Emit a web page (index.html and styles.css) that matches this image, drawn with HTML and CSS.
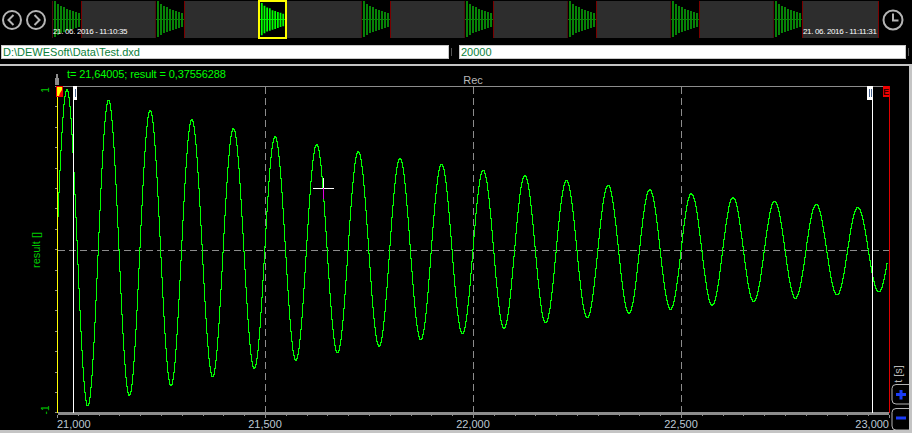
FILE: index.html
```html
<!DOCTYPE html>
<html lang="en">
<head>
  <meta charset="UTF-8">
  <meta name="viewport" content="width=device-width, initial-scale=1.0">
  <title>Test.dxd - result</title>
  <link rel="stylesheet" href="styles.css">
</head>
<body>
  <!-- Shared thumbnail waveform -->
  <svg class="defs" width="0" height="0">
    <symbol id="burst" viewBox="0 0 28 37">
      <path fill="currentColor" d="M1 0h2v36H1zM4 3h2v31H4zM7 5h2v27H7zM10 6h2v25h-2zM13 8h2v22h-2zM16 9h2v20h-2zM19 10h2v18h-2zM22 11h2v16h-2zM25 12h2v14h-2z"/>
      <path fill="currentColor" d="M0 18h28v1H0z"/>
    </symbol>
  </svg>

  <!-- Top strip with overview -->
  <div class="strip">
    <button class="round">
      <svg viewBox="0 0 20 20"><circle cx="10" cy="10" r="9"/><path d="M11.5 5 6.5 10l5 5"/></svg>
    </button>
    <button class="round">
      <svg viewBox="0 0 20 20"><circle cx="10" cy="10" r="9"/><path d="M8.5 5l5 5-5 5"/></svg>
    </button>
    <div class="thumbs">
      <div class="burst"><svg><use href="#burst"/></svg></div>
      <div class="gap"><span class="stamp stamp-start">21. 06. 2016 - 11:10:35</span></div>
      <div class="burst"><svg><use href="#burst"/></svg></div>
      <div class="gap"></div>
      <div class="burst current"><svg><use href="#burst"/></svg></div>
      <div class="gap"></div>
      <div class="burst"><svg><use href="#burst"/></svg></div>
      <div class="gap"></div>
      <div class="burst"><svg><use href="#burst"/></svg></div>
      <div class="gap"></div>
      <div class="burst"><svg><use href="#burst"/></svg></div>
      <div class="gap"></div>
      <div class="burst"><svg><use href="#burst"/></svg></div>
      <div class="gap"></div>
      <div class="burst"><svg><use href="#burst"/></svg></div>
      <div class="gap last"><span class="stamp">21. 06. 2016 - 11:11:31</span></div>
    </div>
    <button class="round clock">
      <svg viewBox="0 0 22 22"><circle cx="11" cy="11" r="9.5"/><path d="M11 4.5V11.5H16.5"/></svg>
    </button>
  </div>

  <!-- File name and sample count -->
  <div class="fields">
    <div class="field field-file">D:\DEWESoft\Data\Test.dxd</div>
    <div class="grip"></div>
    <div class="field field-count">20000</div>
    <div class="grip"></div>
  </div>

  <!-- Recorder graph, drawn in page coordinates -->
  <div class="panel">
    <svg class="plot" viewBox="0 66 909 364" width="909" height="364">
      <text class="readout" x="67" y="78">t= 21,64005; result = 0,37556288</text>
      <text class="label" x="473" y="84" text-anchor="middle">Rec</text>

      <path class="frame" d="M58 86.5H890"/>
      <path class="dash" d="M265.5 87V412M473.5 87V412M681.5 87V412M58 250.5H890"/>
      <path id="ticks" class="tick"/>
      <path class="axis" d="M58 413.5H889"/>

      <path id="signal" class="signal"/>

      <!-- Cursors -->
      <path class="pin" d="M55 85V78h1v-4h2v4h1v7z"/>
      <path class="line-yellow" d="M57.5 86V413"/>
      <path class="line-white" d="M73.5 86V413M872.5 86V413"/>
      <path class="line-red" d="M889.5 86V413"/>
      <rect class="flag-red" x="56" y="86" width="7" height="11"/>
      <path class="flag-yellow" d="M57 87h5v3l-2 3-1 3h-2z"/>
      <rect class="flag-white" x="73" y="86" width="4" height="14"/>
      <path class="flag-mark" d="M75.5 89V97"/>
      <rect class="flag-white" x="867" y="86" width="6" height="14"/>
      <path class="flag-mark" d="M869.5 89V97M871.5 89V97"/>
      <rect class="flag-red" x="883" y="86" width="6" height="11"/>
      <text class="flag-text" x="886" y="95" text-anchor="middle">E</text>

      <!-- Crosshair -->
      <path class="cross" d="M313 188.5H334M323.5 178V188"/>
      <path class="cross-pink" d="M323.5 188V199"/>

      <!-- Axis texts -->
      <text class="value" transform="translate(49 90) rotate(-90)" text-anchor="middle">1</text>
      <text class="value" transform="translate(49 410) rotate(-90)" text-anchor="middle">-1</text>
      <text class="value-name" transform="translate(40 250) rotate(-90)" text-anchor="middle">result []</text>
      <text class="label" transform="translate(902 374) rotate(-90)" text-anchor="middle">t [s]</text>
      <text class="num" x="57" y="428">21,000</text>
      <text class="num" x="265" y="428" text-anchor="middle">21,500</text>
      <text class="num" x="473" y="428" text-anchor="middle">22,000</text>
      <text class="num" x="681" y="428" text-anchor="middle">22,500</text>
      <text class="num" x="889" y="428" text-anchor="end">23,000</text>

      <!-- Zoom buttons -->
      <path class="zoom-edge" d="M909 384.5H896q-4 0-4 4V400q0 4 4 4H909M909 408.5H896q-4 0-4 4V426q0 4 4 4H909"/>
      <path class="zoom-sign" d="M896 394.5H906M901 390V399.5M896 418H906"/>
    </svg>
  </div>

  <script src="plot.js"></script>
</body>
</html>
```

FILE: styles.css
```css
html, body {
  margin: 0;
  background: #000;
}
body {
  width: 912px;
  height: 433px;
  overflow: hidden;
  display: flex;
  flex-direction: column;
  font-family: "Liberation Sans", Arial, sans-serif;
}
.defs {
  position: absolute;
}
/* Top strip */
.strip {
  height: 39px;
  display: flex;
  align-items: center;
  padding-left: 2px;
  gap: 4px;
}
.round {
  width: 20px;
  height: 20px;
  padding: 0;
  border: none;
  background: none;
  flex: none;
}
.round svg {
  display: block;
  width: 100%;
  height: 100%;
  fill: none;
  stroke: #b4b4b4;
  stroke-width: 2;
}
.clock {
  width: 22px;
  height: 22px;
  margin-left: -1px;
}
.thumbs {
  display: flex;
  height: 38px;
  margin-left: 2px;
  align-self: flex-start;
  padding-top: 1px;
}
.burst {
  width: 28px;
  height: 37px;
  color: #078207;
  border-left: 1px solid #4c1010;
  flex: none;
}
.burst svg {
  display: block;
  width: 28px;
  height: 37px;
}
.burst.current {
  width: 25px;
  height: 35px;
  color: #0f0;
  background: #000;
  border: 2px solid #ff0;
  margin-top: -1px;
}
.burst.current svg {
  width: 25px;
  height: 35px;
}
.gap {
  width: 73px;
  height: 37px;
  background: #2d2d2d;
  border-left: 1px solid #7a0000;
  position: relative;
  flex: none;
}
.gap.last {
  width: 75px;
  border-right: 1px solid #7a0000;
}
.burst.current + .gap {
  border-left: none;
  width: 74px;
}
.stamp {
  position: absolute;
  left: 0;
  bottom: 1px;
  font-size: 8px;
  letter-spacing: -0.35px;
  line-height: 10px;
  color: #fff;
  white-space: nowrap;
}
.stamp-start {
  left: -29px;
}
/* Fields */
.fields {
  display: flex;
  height: 14px;
  margin-top: 6px;
  padding-left: 1px;
  align-items: center;
}
.field {
  box-sizing: border-box;
  height: 14px;
  padding-left: 1px;
  background: #fff;
  border: 1px solid #c8c8c8;
  color: #0b7f3c;
  font-size: 11px;
  line-height: 12px;
}
.field-file {
  width: 448px;
}
.field-count {
  width: 447px;
}
.grip {
  width: 1px;
  height: 8px;
  margin: 0 2px;
  background: #555;
}
.field + .grip {
  margin: 0 7px 0 2px;
}
.field-count + .grip {
  margin: 0 0 0 2px;
}
/* Graph */
.panel {
  margin-top: 5px;
  height: 364px;
  border-top: 2px solid #c4c4c4;
  border-right: 3px solid #c4c4c4;
  border-bottom: 3px solid #c4c4c4;
}
.plot {
  display: block;
  background: #000;
}
.plot text {
  font-family: "Liberation Sans", Arial, sans-serif;
}
.readout {
  font-size: 11px;
  letter-spacing: -0.1px;
  fill: #0f0;
}
.value {
  font-size: 10px;
  fill: #0c0;
}
.value-name {
  font-size: 11px;
  fill: #0c0;
}
.label {
  font-size: 11px;
  fill: #b8b8b8;
}
.num {
  font-size: 11px;
  fill: #bcc8d4;
}
.frame {
  stroke: #8c8c8c;
  fill: none;
}
.dash {
  stroke: #8c8c8c;
  fill: none;
  stroke-dasharray: 7 4;
}
.tick {
  stroke: #8c8c8c;
  fill: none;
}
.axis {
  stroke: #8c8c8c;
  stroke-width: 3;
}
.signal {
  fill: none;
  stroke: #0f0;
  stroke-width: 1;
  shape-rendering: crispEdges;
}
.pin {
  fill: #8c8c8c;
}
.line-yellow {
  stroke: #ff0;
}
.line-white {
  stroke: #fff;
}
.line-red {
  stroke: #e00000;
}
.flag-red {
  fill: #f00000;
}
.flag-yellow {
  fill: #ff0;
}
.flag-white {
  fill: #fff;
}
.flag-mark {
  stroke: #45608c;
}
.flag-text {
  font-size: 9px;
  font-weight: bold;
  fill: #300;
}
.cross {
  stroke: #fff;
}
.cross-pink {
  stroke: #e000e0;
}
.zoom-edge {
  fill: none;
  stroke: #b4b4b4;
}
.zoom-sign {
  fill: none;
  stroke: #1a3cf8;
  stroke-width: 3;
}
```

FILE: plot.js
```js
// Damped sine, in page pixels of the graph
var MID = 250;
var AMP = 161;
var PEAK = 67;
var PERIOD = 41.63;
var DECAY = 0.00167;

// Staircase, the way the recorder draws it: one step per pixel
var line = "";
for (var x = 58; x <= 887; x++) {
  var d = x - PEAK;
  var y = MID - AMP * Math.exp(-d * DECAY) * Math.cos(2 * Math.PI * d / PERIOD);
  var py = Math.round(y) + 0.5;
  line += (x === 58 ? "M" : "L") + (x - 0.5) + " " + py + "H" + (x + 0.5);
}
document.getElementById("signal").setAttribute("d", line);

// Small ticks under the time axis and beside the yellow cursor
var ticks = "";
for (var i = 0; i <= 40; i++) {
  var tx = Math.round(57 + i * 20.8) + 0.5;
  ticks += "M" + tx + " 415V" + (i % 10 === 0 ? 418 : 416);
}
for (var j = 0; j <= 16; j++) {
  var ty = Math.round(86 + j * 20.4) + 0.5;
  ticks += "M55 " + ty + "H57";
}
document.getElementById("ticks").setAttribute("d", ticks);
```
